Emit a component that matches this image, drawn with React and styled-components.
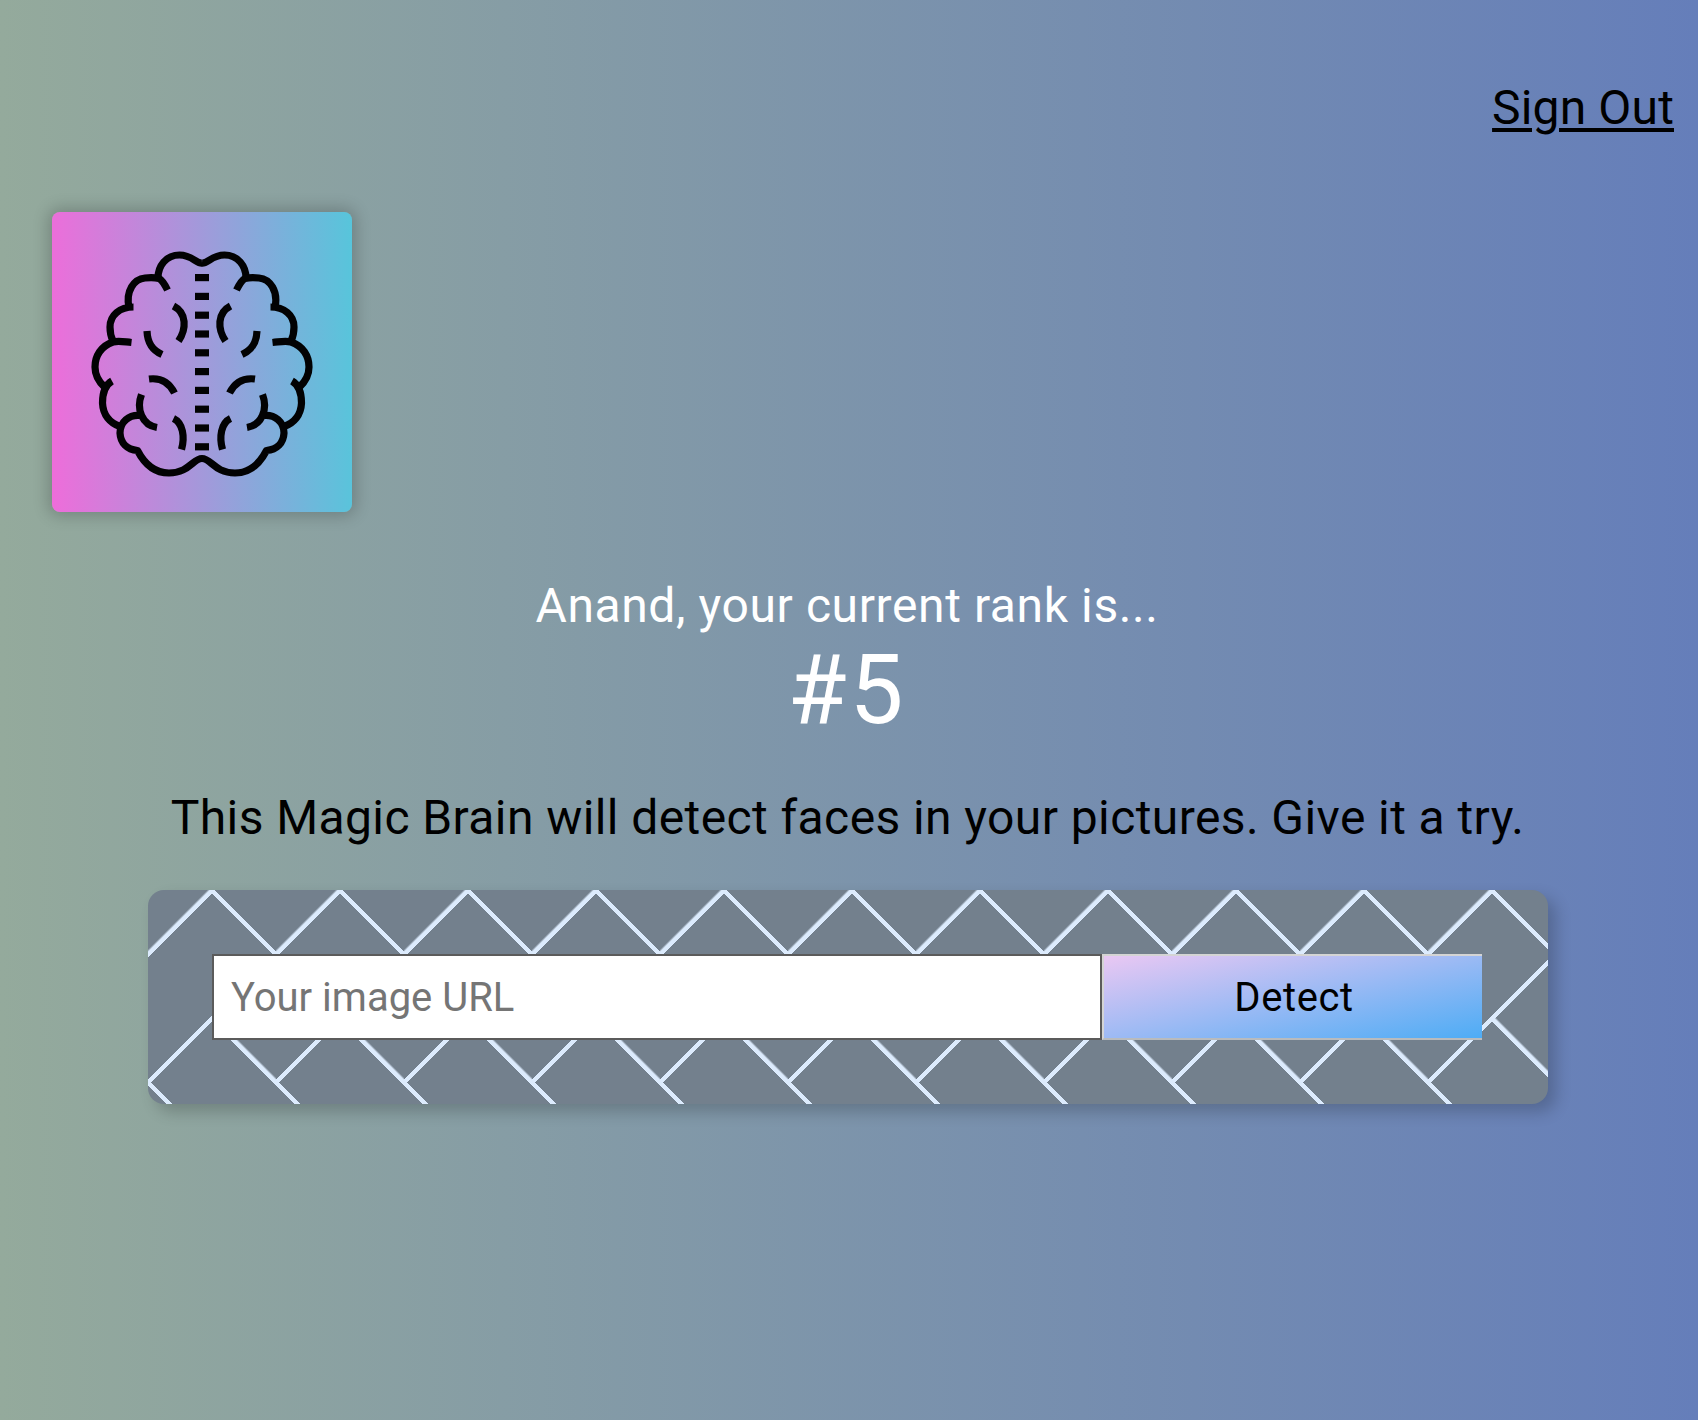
import React from 'react';
import styled, { createGlobalStyle } from 'styled-components';

const GlobalStyle = createGlobalStyle`
  * { box-sizing: border-box; }
  html, body, #root { margin: 0; min-height: 100vh; }
  body {
    font-family: Roboto, 'Noto Sans', sans-serif;
    color: #000;
    overflow: hidden;
    background: linear-gradient(90deg, #94aa9c 0%, #657eba 100%);
  }
`;

const Page = styled.div`
  min-height: 1420px;
  display: flex;
  flex-direction: column;
`;

const Nav = styled.nav`
  display: flex;
  justify-content: flex-end;
  height: 212px;
  padding: 80px 24px 0 0;
`;

const Text = styled.p`
  display: block;
  margin: 0;
  white-space: nowrap;
  font-size: ${(p) => p.$size}px;
  line-height: ${(p) => p.$line}px;
  letter-spacing: ${(p) => p.$track || 0}px;
  color: ${(p) => p.$color || 'inherit'};
`;

const SignOut = styled(Text)`
  text-decoration: underline;
  text-decoration-thickness: 4px;
  text-underline-offset: 4px;
  cursor: pointer;
`;

const Logo = styled.div`
  width: 300px;
  height: 300px;
  margin-left: 52px;
  border-radius: 8px;
  background: linear-gradient(89deg, #ee6dda 0%, #57c5db 100%);
  box-shadow: 0 0 16px 4px rgba(0, 0, 0, 0.2);
`;

const Brain = styled.svg`
  display: block;
  width: 300px;
  height: 300px;
  filter: blur(0.7px);
`;

const Rank = styled.section`
  display: flex;
  flex-direction: column;
  align-items: center;
  padding: 64px 4px 0 0;
`;

const Intro = styled.div`
  display: flex;
  justify-content: center;
  padding: 44px 3px 0 0;
`;

const Form = styled.div`
  display: flex;
  width: 1400px;
  height: 214px;
  margin: 42px 0 0 148px;
  padding: 64px;
  border-radius: 16px;
  box-shadow: 8px 8px 16px 0 rgba(0, 0, 0, 0.2);
  background-color: #73808d;
  background-image:
    linear-gradient(135deg, #73808d 42px, #dcebfd 44px, #dcebfd 48px, transparent 48px, transparent 134px, #dcebfd 134px, #dcebfd 138px, transparent 138px),
    linear-gradient(225deg, #73808d 42px, #dcebfd 44px, #dcebfd 48px, transparent 48px, transparent 134px, #dcebfd 134px, #dcebfd 138px, transparent 138px);
  background-position: 0 0, 0 128px;
  background-size: 128px 256px;
`;

const UrlInput = styled.input`
  width: 890px;
  height: 86px;
  margin: 0;
  padding: 0 16px 0 17px;
  border: 2px solid #5b5b5b;
  border-radius: 0;
  background: #fff;
  font: 40px/50px Roboto, 'Noto Sans', sans-serif;
  outline: none;
  &::placeholder { color: #757575; opacity: 1; }
`;

const Detect = styled.button`
  width: 380px;
  height: 86px;
  padding: 2px 0 0 2px;
  border: 2px solid #d4d4d4;
  border-right: 0;
  border-bottom-color: #b9bbbd;
  background: linear-gradient(to top left, #4cacf5, #ecc8f3);
  background-origin: border-box;
  color: #000;
  font: 40px/50px Roboto, 'Noto Sans', sans-serif;
  letter-spacing: 0.6px;
`;

const dashes = Array.from({ length: 10 }, (_, i) => 65.6 + i * 18.8);

const Half = () => (
  <g>
    <path d="M150 51.2 C144 51.500 140 43 127.500 43 C114 43 106 54 106 66" />
    <path d="M115.500 78 C113 73 110 68 107 66.500 C103 65.500 98 65.500 93 66 C82 67 73.500 79 77 95.500" />
    <path d="M81.500 95 C68 95 58 103 58 115 C58 121 59 125 61 129" />
    <path d="M79.500 130.500 C70 129.500 66 128.500 61 130 C49 134 43 144 43 155 C43 163 46 169 52.500 175" />
    <path d="M60 169 C53 173 50.500 182 50.500 191 C51 203 58 211 68 214.500" />
    <path d="M88 203.500 C77 202.500 68 210 68 221 C68.500 231 75 237.500 85.500 238.500 C93 253 103 261 117 261 C137 261 141 246.500 150 246.500" />
    <path d="M89.500 182.500 C84 197 90 213 105 215.500" />
    <path d="M121.500 94 C135 101 134.500 117 126.500 129" />
    <path d="M95 119 C95.500 131 100 138 110 142.500" />
    <path d="M97 167 C109 165.500 117 170 122.500 181" />
    <path d="M121.500 206.500 C131 211 133 225 129.500 237.500" />
  </g>
);

export default function App() {
  return (
    <>
      <GlobalStyle />
      <Page>
        <Nav>
          <SignOut as="a" $size={48} $line={56} $track={0.15}>Sign Out</SignOut>
        </Nav>
        <Logo>
          <Brain viewBox="0 0 300 300" fill="none" stroke="#020203" strokeWidth="7.2" strokeLinejoin="round">
            <Half />
            <g transform="translate(300 0) scale(-1 1)"><Half /></g>
            {dashes.map((y) => <path key={y} d={`M143 ${y}h14`} />)}
          </Brain>
        </Logo>
        <Rank>
          <Text $size={48} $line={60} $track={0.6} $color="#fff">Anand, your current rank is...</Text>
          <Text $size={96} $line={108} $track={3} $color="#fff">#5</Text>
        </Rank>
        <Intro>
          <Text $size={48} $line={60} $track={0.41}>This Magic Brain will detect faces in your pictures. Give it a try.</Text>
        </Intro>
        <Form>
          <UrlInput type="text" placeholder="Your image URL" />
          <Detect>Detect</Detect>
        </Form>
      </Page>
    </>
  );
}
